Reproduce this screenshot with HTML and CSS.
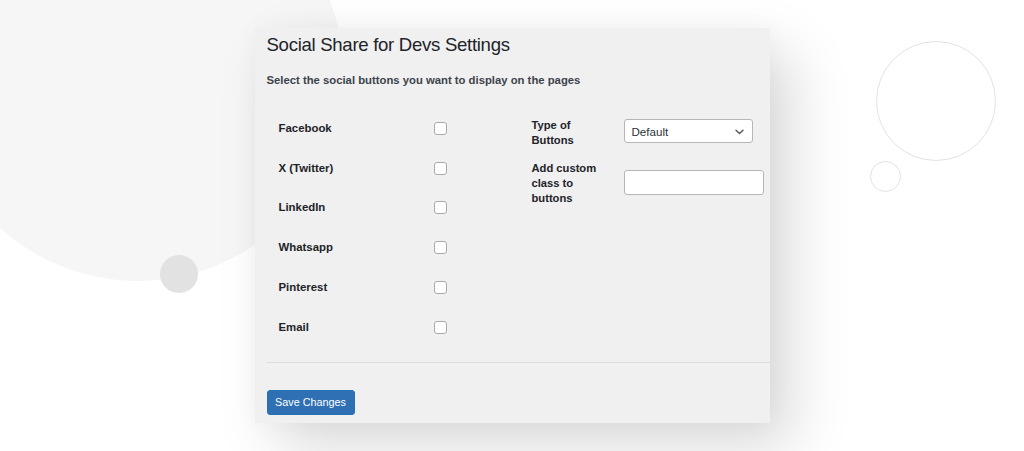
FILE: index.html
```html
<!DOCTYPE html>
<html lang="en">
<head>
<meta charset="utf-8">
<title>Social Share for Devs Settings</title>
<link rel="stylesheet" href="styles.css">
</head>
<body>
<div class="backdrop" aria-hidden="true">
  <span class="blob"></span>
  <span class="dot"></span>
  <span class="ring ring-big"></span>
  <span class="ring ring-small"></span>
</div>
<main class="card">
  <h1 class="title">Social Share for Devs Settings</h1>
  <p class="desc">Select the social buttons you want to display on the pages</p>
  <div class="columns">
    <div class="networks">
      <label class="net-row"><span>Facebook</span><input type="checkbox" class="check"></label>
      <label class="net-row"><span>X (Twitter)</span><input type="checkbox" class="check"></label>
      <label class="net-row"><span>LinkedIn</span><input type="checkbox" class="check"></label>
      <label class="net-row"><span>Whatsapp</span><input type="checkbox" class="check"></label>
      <label class="net-row"><span>Pinterest</span><input type="checkbox" class="check"></label>
      <label class="net-row"><span>Email</span><input type="checkbox" class="check"></label>
    </div>
    <div class="options">
      <div class="opt-row">
        <span class="opt-label">Type of Buttons</span>
        <div class="select">
          <span>Default</span>
          <svg class="chev" width="9" height="6" viewBox="0 0 9 6"><path d="M1 1.2 L4.5 4.6 L8 1.2" fill="none" stroke="#50575e" stroke-width="1.4" stroke-linecap="round" stroke-linejoin="round"/></svg>
        </div>
      </div>
      <div class="opt-row opt-row-2">
        <span class="opt-label">Add custom class to buttons</span>
        <input type="text" class="text-input">
      </div>
    </div>
  </div>
  <hr class="divider">
  <button class="save" type="button">Save Changes</button>
</main>
</body>
</html>
```
FILE: styles.css
```css
* { box-sizing: border-box; }
html, body {
  margin: 0;
  padding: 0;
  background: #ffffff;
  width: 1024px;
  height: 451px;
  overflow: hidden;
  font-family: "Liberation Sans", Arial, sans-serif;
}
body { position: relative; }

.backdrop { position: absolute; inset: 0; z-index: 0; }
.blob {
  position: absolute;
  left: -68px; top: -131px;
  width: 412px; height: 412px;
  border-radius: 50%;
  background: #f6f6f7;
}
.dot {
  position: absolute;
  left: 160px; top: 255px;
  width: 38px; height: 38px;
  border-radius: 50%;
  background: #e2e2e3;
}
.ring {
  position: absolute;
  border-radius: 50%;
  border: 1px solid #e3e3e4;
  background: #ffffff;
}
.ring-big { left: 876px; top: 41px; width: 120px; height: 120px; }
.ring-small { left: 870px; top: 161px; width: 31px; height: 31px; }

.card {
  position: relative;
  z-index: 1;
  width: 515px;
  height: 395px;
  margin: 28px auto 0;
  background: #f0f0f1;
  padding: 5px 0 0 12px;
  box-shadow: 22px 24px 55px rgba(0, 0, 0, 0.15), 0 0 25px rgba(0, 0, 0, 0.03);
  color: #1d2327;
}

.title {
  margin: 0;
  font-size: 18.6px;
  line-height: 24px;
  font-weight: 400;
  letter-spacing: -0.3px;
  color: #1d2327;
}
.desc {
  margin: 16px 0 0;
  font-size: 11.3px;
  line-height: 15px;
  font-weight: 700;
  color: #3c434a;
}

.columns {
  display: flex;
  margin-top: 20px;
}
.networks {
  width: 253px;
  padding-left: 12px;
  display: flex;
  flex-direction: column;
}
.net-row {
  display: grid;
  grid-template-columns: 155px 13px;
  align-items: center;
  height: 39.8px;
  font-size: 11.4px;
  font-weight: 700;
  color: #1d2327;
}
.check {
  appearance: none;
  -webkit-appearance: none;
  margin: 1px 0 0;
  width: 13px;
  height: 13px;
  border: 1px solid #a7aaad;
  border-radius: 3px;
  background: #ffffff;
}

.options {
  padding: 10px 0 0 12px;
  display: flex;
  flex-direction: column;
  gap: 13px;
}
.opt-row {
  display: grid;
  grid-template-columns: 92px auto;
  align-items: start;
}
.opt-label {
  width: 78px;
  font-size: 11.2px;
  line-height: 15px;
  font-weight: 700;
  color: #1d2327;
}
.select {
  margin-top: 1px;
  width: 129px;
  height: 24px;
  border: 1px solid #b4b7ba;
  border-radius: 3px;
  background: #ffffff;
  display: flex;
  align-items: center;
  justify-content: space-between;
  padding: 0 8px 0 7px;
  font-size: 11.6px;
  color: #2c3338;
}
.chev { display: block; margin-top: 1px; }
.text-input {
  margin: 9px 0 0;
  width: 140px;
  height: 25px;
  border: 1px solid #b4b7ba;
  border-radius: 3px;
  background: #ffffff;
  padding: 0 6px;
}

.divider {
  margin: 15px 0 0;
  border: 0;
  border-top: 1px solid #dcdcde;
  height: 0;
}
.save {
  margin-top: 27px;
  width: 88px;
  height: 25px;
  padding: 0;
  border: 1px solid #2271b1;
  border-radius: 3px;
  background: #2f6fb3;
  color: #ffffff;
  font-family: "Liberation Sans", Arial, sans-serif;
  font-size: 10.8px;
  line-height: 23px;
}
```
